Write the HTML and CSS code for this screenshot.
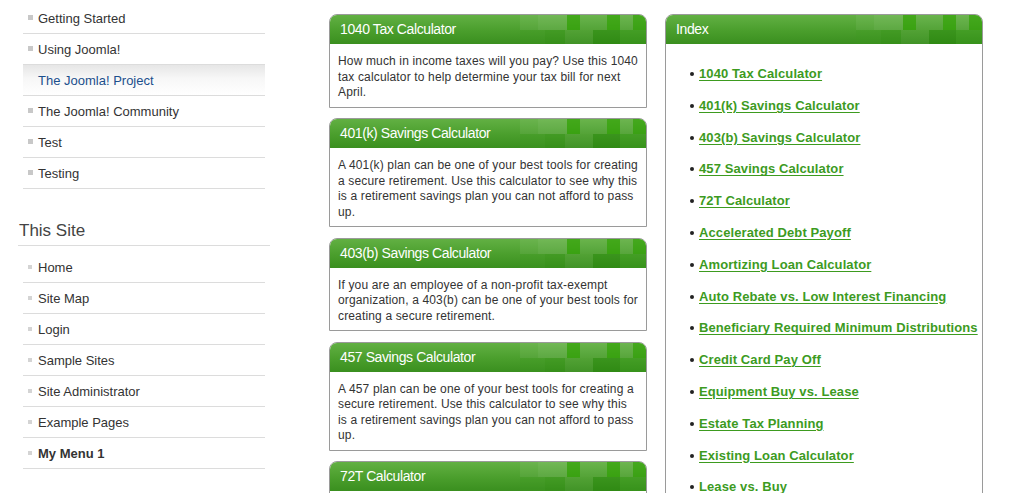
FILE: index.html
```html
<!DOCTYPE html>
<html lang="en">
<head>
<meta charset="utf-8">
<title>Calculators</title>
<link rel="stylesheet" href="styles.css">
</head>
<body>
<div class="page">
  <aside class="sidebar">
    <ul class="menu">
      <li>Getting Started</li>
      <li>Using Joomla!</li>
      <li class="active">The Joomla! Project</li>
      <li>The Joomla! Community</li>
      <li>Test</li>
      <li>Testing</li>
    </ul>
    <h3 class="side-title">This Site</h3>
    <ul class="menu menu-site">
      <li>Home</li>
      <li>Site Map</li>
      <li>Login</li>
      <li>Sample Sites</li>
      <li>Site Administrator</li>
      <li>Example Pages</li>
      <li class="strong">My Menu 1</li>
    </ul>
  </aside>

  <main class="column">
    <section class="card">
      <div class="card-head"><span>1040 Tax Calculator</span>
        <svg class="pattern" width="126" height="29" viewBox="0 0 126 29"><g><rect x="0" y="0" width="18" height="15" fill="#fff" opacity=".06"/><rect x="18" y="0" width="29" height="15" fill="#fff" opacity=".1"/><rect x="47" y="0" width="13" height="15" fill="#2ea300" opacity=".6"/><rect x="60" y="0" width="27" height="15" fill="#fff" opacity=".05"/><rect x="87" y="0" width="13" height="15" fill="#2ea300" opacity=".6"/><rect x="100" y="0" width="13" height="15" fill="#fff" opacity=".07"/><rect x="113" y="0" width="13" height="15" fill="#2ea300" opacity=".55"/><rect x="0" y="15" width="25" height="14" fill="#3a9a1e" opacity=".2"/><rect x="25" y="15" width="20" height="14" fill="#2a8e0c" opacity=".25"/><rect x="45" y="15" width="28" height="14" fill="#fff" opacity=".04"/><rect x="73" y="15" width="27" height="14" fill="#1c8000" opacity=".35"/><rect x="100" y="15" width="26" height="14" fill="#2e9a10" opacity=".25"/></g></svg>
      </div>
      <div class="card-body">How much in income taxes will you pay? Use this 1040 tax calculator to help determine your tax bill for next April.</div>
    </section>
    <section class="card">
      <div class="card-head"><span>401(k) Savings Calculator</span>
        <svg class="pattern" width="126" height="29" viewBox="0 0 126 29"><g><rect x="0" y="0" width="18" height="15" fill="#fff" opacity=".06"/><rect x="18" y="0" width="29" height="15" fill="#fff" opacity=".1"/><rect x="47" y="0" width="13" height="15" fill="#2ea300" opacity=".6"/><rect x="60" y="0" width="27" height="15" fill="#fff" opacity=".05"/><rect x="87" y="0" width="13" height="15" fill="#2ea300" opacity=".6"/><rect x="100" y="0" width="13" height="15" fill="#fff" opacity=".07"/><rect x="113" y="0" width="13" height="15" fill="#2ea300" opacity=".55"/><rect x="0" y="15" width="25" height="14" fill="#3a9a1e" opacity=".2"/><rect x="25" y="15" width="20" height="14" fill="#2a8e0c" opacity=".25"/><rect x="45" y="15" width="28" height="14" fill="#fff" opacity=".04"/><rect x="73" y="15" width="27" height="14" fill="#1c8000" opacity=".35"/><rect x="100" y="15" width="26" height="14" fill="#2e9a10" opacity=".25"/></g></svg>
      </div>
      <div class="card-body">A 401(k) plan can be one of your best tools for creating a secure retirement. Use this calculator to see why this is a retirement savings plan you can not afford to pass up.</div>
    </section>
    <section class="card">
      <div class="card-head"><span>403(b) Savings Calculator</span>
        <svg class="pattern" width="126" height="29" viewBox="0 0 126 29"><g><rect x="0" y="0" width="18" height="15" fill="#fff" opacity=".06"/><rect x="18" y="0" width="29" height="15" fill="#fff" opacity=".1"/><rect x="47" y="0" width="13" height="15" fill="#2ea300" opacity=".6"/><rect x="60" y="0" width="27" height="15" fill="#fff" opacity=".05"/><rect x="87" y="0" width="13" height="15" fill="#2ea300" opacity=".6"/><rect x="100" y="0" width="13" height="15" fill="#fff" opacity=".07"/><rect x="113" y="0" width="13" height="15" fill="#2ea300" opacity=".55"/><rect x="0" y="15" width="25" height="14" fill="#3a9a1e" opacity=".2"/><rect x="25" y="15" width="20" height="14" fill="#2a8e0c" opacity=".25"/><rect x="45" y="15" width="28" height="14" fill="#fff" opacity=".04"/><rect x="73" y="15" width="27" height="14" fill="#1c8000" opacity=".35"/><rect x="100" y="15" width="26" height="14" fill="#2e9a10" opacity=".25"/></g></svg>
      </div>
      <div class="card-body">If you are an employee of a non-profit tax-exempt organization, a 403(b) can be one of your best tools for creating a secure retirement.</div>
    </section>
    <section class="card">
      <div class="card-head"><span>457 Savings Calculator</span>
        <svg class="pattern" width="126" height="29" viewBox="0 0 126 29"><g><rect x="0" y="0" width="18" height="15" fill="#fff" opacity=".06"/><rect x="18" y="0" width="29" height="15" fill="#fff" opacity=".1"/><rect x="47" y="0" width="13" height="15" fill="#2ea300" opacity=".6"/><rect x="60" y="0" width="27" height="15" fill="#fff" opacity=".05"/><rect x="87" y="0" width="13" height="15" fill="#2ea300" opacity=".6"/><rect x="100" y="0" width="13" height="15" fill="#fff" opacity=".07"/><rect x="113" y="0" width="13" height="15" fill="#2ea300" opacity=".55"/><rect x="0" y="15" width="25" height="14" fill="#3a9a1e" opacity=".2"/><rect x="25" y="15" width="20" height="14" fill="#2a8e0c" opacity=".25"/><rect x="45" y="15" width="28" height="14" fill="#fff" opacity=".04"/><rect x="73" y="15" width="27" height="14" fill="#1c8000" opacity=".35"/><rect x="100" y="15" width="26" height="14" fill="#2e9a10" opacity=".25"/></g></svg>
      </div>
      <div class="card-body">A 457 plan can be one of your best tools for creating a secure retirement. Use this calculator to see why this is a retirement savings plan you can not afford to pass up.</div>
    </section>
    <section class="card">
      <div class="card-head"><span>72T Calculator</span>
        <svg class="pattern" width="126" height="29" viewBox="0 0 126 29"><g><rect x="0" y="0" width="18" height="15" fill="#fff" opacity=".06"/><rect x="18" y="0" width="29" height="15" fill="#fff" opacity=".1"/><rect x="47" y="0" width="13" height="15" fill="#2ea300" opacity=".6"/><rect x="60" y="0" width="27" height="15" fill="#fff" opacity=".05"/><rect x="87" y="0" width="13" height="15" fill="#2ea300" opacity=".6"/><rect x="100" y="0" width="13" height="15" fill="#fff" opacity=".07"/><rect x="113" y="0" width="13" height="15" fill="#2ea300" opacity=".55"/><rect x="0" y="15" width="25" height="14" fill="#3a9a1e" opacity=".2"/><rect x="25" y="15" width="20" height="14" fill="#2a8e0c" opacity=".25"/><rect x="45" y="15" width="28" height="14" fill="#fff" opacity=".04"/><rect x="73" y="15" width="27" height="14" fill="#1c8000" opacity=".35"/><rect x="100" y="15" width="26" height="14" fill="#2e9a10" opacity=".25"/></g></svg>
      </div>
      <div class="card-body">Use this calculator to determine the allowable distributions from your IRA or qualified plan.</div>
    </section>
  </main>

  <aside class="index">
    <section class="card index-card">
      <div class="card-head"><span>Index</span>
        <svg class="pattern" width="126" height="29" viewBox="0 0 126 29"><g><rect x="0" y="0" width="18" height="15" fill="#fff" opacity=".06"/><rect x="18" y="0" width="29" height="15" fill="#fff" opacity=".1"/><rect x="47" y="0" width="13" height="15" fill="#2ea300" opacity=".6"/><rect x="60" y="0" width="27" height="15" fill="#fff" opacity=".05"/><rect x="87" y="0" width="13" height="15" fill="#2ea300" opacity=".6"/><rect x="100" y="0" width="13" height="15" fill="#fff" opacity=".07"/><rect x="113" y="0" width="13" height="15" fill="#2ea300" opacity=".55"/><rect x="0" y="15" width="25" height="14" fill="#3a9a1e" opacity=".2"/><rect x="25" y="15" width="20" height="14" fill="#2a8e0c" opacity=".25"/><rect x="45" y="15" width="28" height="14" fill="#fff" opacity=".04"/><rect x="73" y="15" width="27" height="14" fill="#1c8000" opacity=".35"/><rect x="100" y="15" width="26" height="14" fill="#2e9a10" opacity=".25"/></g></svg>
      </div>
      <ul class="index-list">
        <li><a href="#">1040 Tax Calculator</a></li>
        <li><a href="#">401(k) Savings Calculator</a></li>
        <li><a href="#">403(b) Savings Calculator</a></li>
        <li><a href="#">457 Savings Calculator</a></li>
        <li><a href="#">72T Calculator</a></li>
        <li><a href="#">Accelerated Debt Payoff</a></li>
        <li><a href="#">Amortizing Loan Calculator</a></li>
        <li><a href="#">Auto Rebate vs. Low Interest Financing</a></li>
        <li><a href="#">Beneficiary Required Minimum Distributions</a></li>
        <li><a href="#">Credit Card Pay Off</a></li>
        <li><a href="#">Equipment Buy vs. Lease</a></li>
        <li><a href="#">Estate Tax Planning</a></li>
        <li><a href="#">Existing Loan Calculator</a></li>
        <li><a href="#">Lease vs. Buy</a></li>
      </ul>
    </section>
  </aside>
</div>
</body>
</html>
```

FILE: styles.css
```css
html, body {
  margin: 0;
  padding: 0;
  height: 493px;
  overflow: hidden;
  background: #fff;
}

body {
  font-family: "Liberation Sans", Arial, sans-serif;
  color: #333;
}

.page {
  display: flex;
  align-items: flex-start;
  padding-left: 18px;
}

/* ---------- sidebar ---------- */
.sidebar {
  width: 252px;
  flex: none;
}

.menu {
  list-style: none;
  margin: 0 5px;
  padding: 3px 0 0;
}

.menu li {
  position: relative;
  height: 30px;
  line-height: 32px;
  border-bottom: 1px solid #dcdcdc;
  padding-left: 15px;
  font-size: 13px;
  color: #333;
}

.menu li::before {
  content: "";
  position: absolute;
  left: 5px;
  top: 12px;
  width: 5px;
  height: 5px;
  background: #c8c8c8;
}

.menu li.active {
  color: #1b4f8c;
  background: linear-gradient(#e6e6e6, #f7f7f7 45%, #fff);
}

.menu li.active::before {
  display: none;
}

.menu-site {
  padding-top: 0;
  margin-top: 6px;
}

.menu-site li::before {
  background: #d4d4d4;
  width: 4px;
  height: 4px;
  top: 13px;
}

.menu li.strong {
  font-weight: bold;
}

.side-title {
  margin: 32px 0 0;
  padding: 0 0 4px 1px;
  font-size: 17px;
  line-height: 20px;
  font-weight: normal;
  color: #444;
  border-bottom: 1px solid #dcdcdc;
}

/* ---------- cards ---------- */
.column {
  width: 318px;
  flex: none;
  margin-left: 59px;
  padding-top: 14px;
}

.index {
  width: 318px;
  flex: none;
  margin-left: 18px;
  padding-top: 14px;
}

.card {
  border: 1px solid #9a9a9a;
  border-radius: 8px 8px 0 0;
  background: #fff;
  margin-bottom: 10.5px;
}

.card-head {
  position: relative;
  height: 29px;
  line-height: 29px;
  padding-left: 10px;
  border-radius: 7px 7px 0 0;
  overflow: hidden;
  background: linear-gradient(#62b043, #4a9e2c 55%, #3a8f1f);
  color: #fff;
  font-size: 14px;
  letter-spacing: -0.4px;
}

.card-head span {
  position: relative;
  z-index: 1;
}

.pattern {
  position: absolute;
  right: 0;
  top: 0;
  display: block;
}

.card-body {
  padding: 10px 7.5px 6px 8px;
  font-size: 12px;
  line-height: 15.5px;
  letter-spacing: 0.15px;
  color: #333;
}

/* ---------- index ---------- */
.index-card {
  height: 600px;
}

.index-list {
  list-style: none;
  margin: 0;
  padding: 14px 0 0 33px;
}

.index-list li {
  position: relative;
  font-size: 13px;
  line-height: 31.8px;
  white-space: nowrap;
}

.index-list li::before {
  content: "";
  position: absolute;
  left: -9px;
  top: 14px;
  width: 4px;
  height: 4px;
  border-radius: 50%;
  background: #222;
}

.index-list a {
  color: #3d9b1f;
  font-weight: bold;
  font-size: 13px;
  letter-spacing: 0.1px;
  text-decoration: underline;
  text-underline-offset: 2px;
}
```
